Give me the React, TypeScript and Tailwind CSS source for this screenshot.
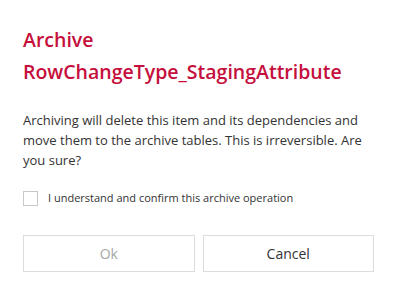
export default function App() {
  return (
    <div
      className="w-[397px] h-[302px] bg-white px-[23px] pt-[24px]"
      style={{ fontFamily: '"Open Sans", "Noto Sans", sans-serif' }}
    >
      <h1 className="text-[19.5px] font-semibold leading-[32px] text-[#c50f3c]">
        Archive
        <br />
        RowChangeType_StagingAttribute
      </h1>

      <p className="mt-[22px] text-[13px] leading-[20px] text-[#333333]">
        Archiving will delete this item and its dependencies and move them to
        the archive tables. This is irreversible. Are you sure?
      </p>

      <label className="mt-[20px] flex items-center gap-[10px] text-[11px] text-[#333333]">
        <span className="w-[15px] h-[15px] border border-[#c8c8c8] bg-white" />
        I understand and confirm this archive operation
      </label>

      <div className="mt-[28px] grid grid-cols-2 gap-[8px]">
        <button
          disabled
          className="h-[37px] border border-[#dcdcdc] bg-white text-[14px] text-[#a6a6a6]"
        >
          Ok
        </button>
        <button className="h-[37px] border border-[#dcdcdc] bg-white text-[14px] text-[#333333]">
          Cancel
        </button>
      </div>
    </div>
  );
}
